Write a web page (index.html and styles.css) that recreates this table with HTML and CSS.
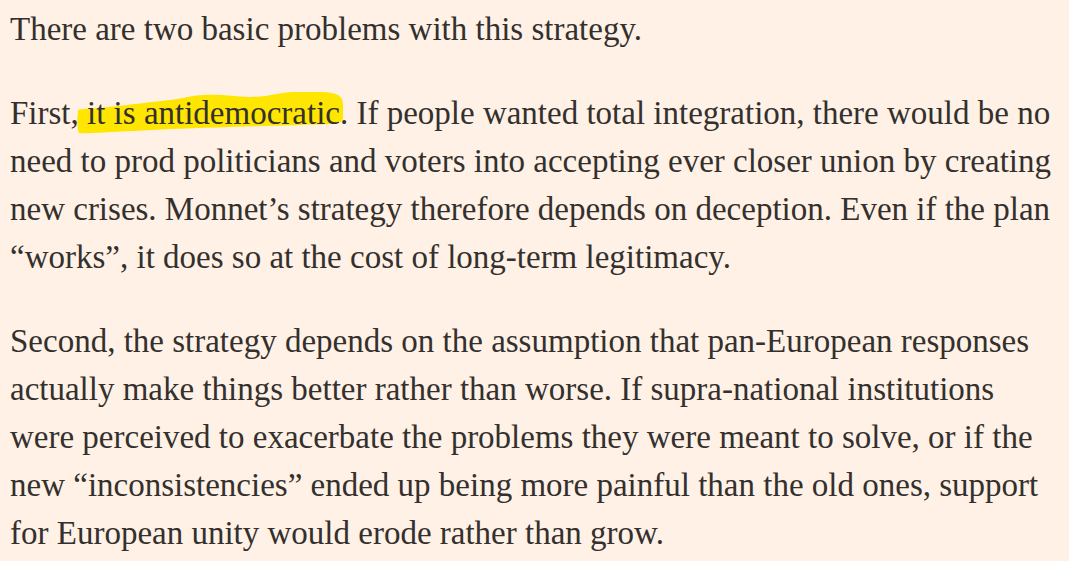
FILE: index.html
```html
<!DOCTYPE html>
<html lang="en">
<head>
<meta charset="utf-8">
<title>Article excerpt</title>
<link rel="stylesheet" href="styles.css">
</head>
<body>
<main class="article">
  <p class="para">There are two basic problems with this strategy.</p>
  <p class="para">First,<span class="hl"><svg class="hl-mark" viewBox="0 0 272 48" preserveAspectRatio="none" aria-hidden="true"><path d="M3,24 C2,22 4,21 8,21 C30,20 50,17 95,12 C110,10 120,7 128,7 C150,6 160,9 175,9 C195,9 205,4 218,4 L245,4 C262,4 268,8 268,16 L268,30 C268,34 264,35 255,36 C230,37 190,38 155,39 C120,40 90,41 60,43 C30,44 10,46 4,45 C2,40 2,30 3,24 Z"/></svg> it is antidemocratic</span>. If people wanted total integration, there would be no<br>need to prod politicians and voters into accepting ever closer union by creating<br>new crises. Monnet’s strategy therefore depends on deception. Even if the plan<br>“works”, it does so at the cost of long-term legitimacy.</p>
  <p class="para">Second, the strategy depends on the assumption that pan-European responses<br>actually make things better rather than worse. If supra-national institutions<br>were perceived to exacerbate the problems they were meant to solve, or if the<br>new “inconsistencies” ended up being more painful than the old ones, support<br>for European unity would erode rather than grow.</p>
</main>
</body>
</html>
```

FILE: styles.css
```css
html, body {
  margin: 0;
  padding: 0;
}
body {
  background: #fff1e5;
  color: #33302e;
  font-family: "Liberation Serif", "DejaVu Serif", serif;
}
.article {
  padding: 5px 0 0 10px;
}
.para {
  margin: 0 0 36px 0;
  font-size: 33px;
  line-height: 48px;
  white-space: nowrap;
}
.para:last-child {
  margin-bottom: 0;
}
.hl {
  position: relative;
}
.hl-mark {
  position: absolute;
  left: -4px;
  top: -7px;
  width: 272px;
  height: 48px;
  z-index: -1;
  fill: #ffe600;
}
```
